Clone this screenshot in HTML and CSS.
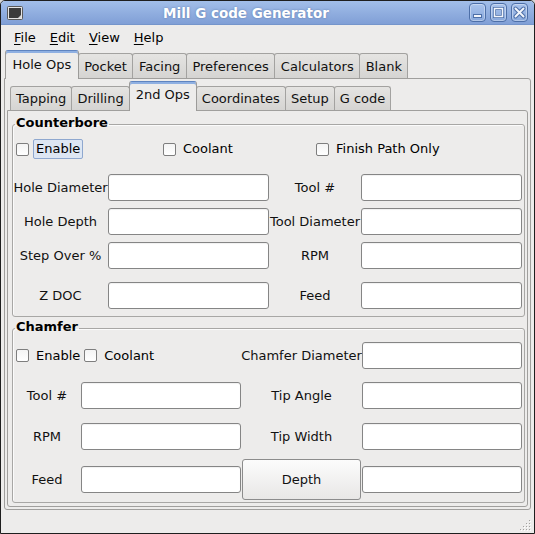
FILE: index.html
```html
<!DOCTYPE html>
<html>
<head>
<meta charset="utf-8">
<title>Mill G code Generator</title>
<link rel="stylesheet" href="styles.css">
</head>
<body>
<div class="window">
  <div class="titlebar">
    <svg class="app-icon" width="16" height="14" viewBox="0 0 16 14">
      <rect x="0.5" y="0.5" width="15" height="13" rx="1" fill="#e4e4e4" stroke="#5a5a5a"/>
      <rect x="2" y="2" width="12" height="10" fill="#3c3c3c"/>
      <path d="M11 12 L14 9 L14 12 Z" fill="#d8d8d8"/>
    </svg>
    <div class="title">Mill G code Generator</div>
    <div class="wm-buttons">
      <span class="wm-btn">
        <svg width="15" height="17" viewBox="0 0 15 17"><rect x="3.5" y="10.5" width="8" height="3" fill="#f2f5fb" stroke="#4d6fa8" stroke-width="1"/></svg>
      </span>
      <span class="wm-btn">
        <svg width="15" height="17" viewBox="0 0 15 17"><rect x="3.5" y="4.5" width="8" height="8" fill="none" stroke="#4d6fa8" stroke-width="3"/><rect x="3.5" y="4.5" width="8" height="8" fill="none" stroke="#f2f5fb" stroke-width="1.5"/></svg>
      </span>
      <span class="wm-btn">
        <svg width="15" height="17" viewBox="0 0 15 17"><path d="M3.5 4.5 L11.5 12.5 M11.5 4.5 L3.5 12.5" stroke="#4d6fa8" stroke-width="4" stroke-linecap="round"/><path d="M3.5 4.5 L11.5 12.5 M11.5 4.5 L3.5 12.5" stroke="#f2f5fb" stroke-width="2" stroke-linecap="round"/></svg>
      </span>
    </div>
  </div>

  <div class="menubar">
    <span class="menu"><u>F</u>ile</span>
    <span class="menu"><u>E</u>dit</span>
    <span class="menu"><u>V</u>iew</span>
    <span class="menu"><u>H</u>elp</span>
  </div>

  <div class="main">
    <div class="tabbar outer-tabs">
      <div class="tab active">Hole Ops</div>
      <div class="tab">Pocket</div>
      <div class="tab">Facing</div>
      <div class="tab">Preferences</div>
      <div class="tab">Calculators</div>
      <div class="tab">Blank</div>
    </div>
    <div class="pane outer-pane">
      <div class="tabbar inner-tabs">
        <div class="tab">Tapping</div>
        <div class="tab">Drilling</div>
        <div class="tab active">2nd Ops</div>
        <div class="tab">Coordinates</div>
        <div class="tab">Setup</div>
        <div class="tab">G code</div>
      </div>
      <div class="pane inner-pane">
        <fieldset class="group counterbore">
          <legend>Counterbore</legend>
          <div class="checks cb-checks">
            <label class="check"><input type="checkbox"><span class="check-text focused">Enable</span></label>
            <label class="check"><input type="checkbox"><span class="check-text">Coolant</span></label>
            <label class="check"><input type="checkbox"><span class="check-text">Finish Path Only</span></label>
          </div>
          <div class="row cb-cols first">
            <span class="lbl">Hole Diameter</span><input type="text" class="field">
            <span class="lbl">Tool #</span><input type="text" class="field">
          </div>
          <div class="row cb-cols">
            <span class="lbl">Hole Depth</span><input type="text" class="field">
            <span class="lbl">Tool Diameter</span><input type="text" class="field">
          </div>
          <div class="row cb-cols">
            <span class="lbl">Step Over %</span><input type="text" class="field">
            <span class="lbl">RPM</span><input type="text" class="field">
          </div>
          <div class="row cb-cols wide-gap">
            <span class="lbl">Z DOC</span><input type="text" class="field">
            <span class="lbl">Feed</span><input type="text" class="field">
          </div>
        </fieldset>

        <fieldset class="group chamfer">
          <legend>Chamfer</legend>
          <div class="row ch-cols ch-first">
            <div class="checks ch-checks">
              <label class="check"><input type="checkbox"><span class="check-text">Enable</span></label>
              <label class="check"><input type="checkbox"><span class="check-text">Coolant</span></label>
            </div>
            <span class="lbl">Chamfer Diameter</span><input type="text" class="field">
          </div>
          <div class="row ch-cols ch-r2">
            <span class="lbl">Tool #</span><input type="text" class="field">
            <span class="lbl">Tip Angle</span><input type="text" class="field">
          </div>
          <div class="row ch-cols ch-r3">
            <span class="lbl">RPM</span><input type="text" class="field">
            <span class="lbl">Tip Width</span><input type="text" class="field">
          </div>
          <div class="row ch-cols ch-r4">
            <span class="lbl">Feed</span><input type="text" class="field">
            <button type="button" class="btn">Depth</button><input type="text" class="field">
          </div>
        </fieldset>
      </div>
    </div>
  </div>

  <div class="statusbar">
    <svg class="grip" width="11" height="11" viewBox="0 0 11 11">
      <g fill="#ffffff">
        <rect x="10" y="1" width="1" height="1"/>
        <rect x="7" y="4" width="1" height="1"/><rect x="10" y="4" width="1" height="1"/>
        <rect x="4" y="7" width="1" height="1"/><rect x="7" y="7" width="1" height="1"/><rect x="10" y="7" width="1" height="1"/>
        <rect x="1" y="10" width="1" height="1"/><rect x="4" y="10" width="1" height="1"/><rect x="7" y="10" width="1" height="1"/><rect x="10" y="10" width="1" height="1"/>
      </g>
      <g fill="#a3a2a0">
        <rect x="9" y="0" width="1" height="1"/>
        <rect x="6" y="3" width="1" height="1"/><rect x="9" y="3" width="1" height="1"/>
        <rect x="3" y="6" width="1" height="1"/><rect x="6" y="6" width="1" height="1"/><rect x="9" y="6" width="1" height="1"/>
        <rect x="0" y="9" width="1" height="1"/><rect x="3" y="9" width="1" height="1"/><rect x="6" y="9" width="1" height="1"/><rect x="9" y="9" width="1" height="1"/>
      </g>
    </svg>
  </div>
</div>
</body>
</html>
```

FILE: styles.css
```css
* { box-sizing: border-box; }

html, body {
  margin: 0;
  padding: 0;
  background: #d6d6d6;
}

body {
  font-family: "DejaVu Sans", "Noto Sans", sans-serif;
  font-size: 13px;
  color: #000;
}

.window {
  width: 535px;
  height: 534px;
  border: 1px solid #1e1e1e;
  border-radius: 5px 5px 0 0;
  background: #edeceb;
  display: flex;
  flex-direction: column;
  overflow: hidden;
}

/* ---------- title bar ---------- */
.titlebar {
  height: 24px;
  flex: none;
  display: flex;
  align-items: center;
  padding: 0 6px;
  background: linear-gradient(#a2bee9, #809fd6);
  border-bottom: 1px solid #7595cb;
}

.app-icon { flex: none; }

.title {
  flex: 1;
  text-align: center;
  font-weight: bold;
  font-size: 13.5px;
  color: #ffffff;
  text-shadow: 0 0 2px rgba(50, 80, 130, 0.55);
  padding-top: 1px;
}

.wm-buttons {
  display: flex;
  gap: 4px;
  flex: none;
}

.wm-btn {
  width: 17px;
  height: 19px;
  border: 1px solid #4d6fa8;
  border-radius: 4px;
  background: linear-gradient(#a9c3ec, #88a8dc);
  box-shadow: inset 0 0 0 1px rgba(255, 255, 255, 0.35);
  display: flex;
  align-items: center;
  justify-content: center;
}

/* ---------- menu bar ---------- */
.menubar {
  height: 23px;
  flex: none;
  display: flex;
  align-items: center;
  padding: 2px 0 0 6px;
}

.menu {
  padding: 0 7px;
  line-height: 18px;
}

.menu u { text-decoration-thickness: 1px; text-underline-offset: 2px; }

/* ---------- tabs ---------- */
.main {
  flex: 1;
  display: flex;
  flex-direction: column;
  padding: 0 3px;
}

.tabbar {
  display: flex;
  align-items: flex-end;
  flex: none;
}

.outer-tabs {
  height: 30px;
  padding-left: 1px;
}

.inner-tabs {
  height: 29px;
  padding-left: 3px;
}

.tab {
  height: 25px;
  display: flex;
  align-items: center;
  white-space: nowrap;
  padding: 0 5.5px;
  border: 1px solid #a3a2a0;
  border-bottom: none;
  border-radius: 3px 3px 0 0;
  margin-left: -1px;
  background: linear-gradient(#e5e4e2, #d5d4d2);
  color: #111;
}

.tab:first-child { margin-left: 0; }

.inner-tabs .tab {
  height: 24px;
  padding: 0 5px;
}

.tab.active {
  background: #edeceb;
  border-color: #9c9b99;
  border-top: 1px solid #5f84c0;
  box-shadow: inset 0 2px 0 #8fb0e2;
  margin-bottom: -1px;
  z-index: 1;
  height: 29px;
  padding: 0 6.5px 2px 6.5px;
}

.inner-tabs .tab.active {
  height: 30px;
  padding: 0 6px 4px 6px;
}

.pane {
  border: 1px solid #a09f9d;
  background: #edeceb;
  display: flex;
  flex-direction: column;
}

.outer-pane {
  flex: 1;
  padding: 2px;
  border-radius: 0 3px 3px 3px;
}

.inner-pane {
  flex: 1;
  padding: 4px 2px 3px 4px;
  border-radius: 0 3px 3px 3px;
}

/* ---------- group boxes ---------- */
.group {
  margin: 0;
  padding: 0 0 7px 0;
  min-inline-size: 0;
  border: 1px solid #a8a7a5;
  border-radius: 3px;
  box-shadow: inset 1px 1px 0 #fbfbfb;
}

.group legend {
  font-weight: bold;
  font-size: 13px;
  line-height: 15px;
  padding: 0 1px 3px 1px;
  margin-left: 2px;
}

.chamfer {
  margin-top: 2px;
  padding-bottom: 2px;
}

/* ---------- checkboxes ---------- */
.checks {
  display: flex;
  align-items: center;
}

.cb-checks {
  display: grid;
  grid-template-columns: 147px 153px 1fr;
  height: 20px;
  margin-top: 6px;
  padding-left: 3px;
}

.ch-checks {
  grid-column: span 2;
  gap: 1px;
  padding-left: 3px;
}

.check {
  display: flex;
  align-items: center;
  gap: 4px;
  white-space: nowrap;
}

.check input {
  appearance: none;
  -webkit-appearance: none;
  width: 13px;
  height: 13px;
  margin: 0;
  border: 1px solid #7e7e7e;
  border-radius: 2px;
  background: linear-gradient(#f4f4f4, #ffffff);
  flex: none;
}

.check-text {
  line-height: 18px;
  padding: 0 2px;
  border: 1px solid transparent;
  border-radius: 2px;
}

.check-text.focused {
  background: #dde6f3;
  border-color: #8fa8cf;
}

/* ---------- form rows ---------- */
.row {
  display: grid;
  align-items: center;
  height: 27px;
  margin-top: 7px;
}

.cb-cols { grid-template-columns: 95px 161px 92px 161px; }
.ch-cols { grid-template-columns: 68px 160px 121px 160px; }

.row.first { margin-top: 15px; }
.row.wide-gap { margin-top: 13px; }

.ch-first { margin-top: 5px; }
.ch-r2 { margin-top: 13px; }
.ch-r3 { margin-top: 14px; }
.ch-r4 { margin-top: 9px; height: 41px; }

.lbl {
  text-align: center;
  white-space: nowrap;
  color: #111;
}

.field {
  width: 100%;
  height: 27px;
  margin: 0;
  padding: 0 4px;
  border: 1px solid #858585;
  border-radius: 3px;
  background: #ffffff;
  box-shadow: inset 0 1px 1px rgba(0, 0, 0, 0.06);
  font: inherit;
}

.btn {
  height: 41px;
  margin: 0 1px;
  width: calc(100% - 2px);
  border: 1px solid #8c8c8c;
  border-radius: 3px;
  background: linear-gradient(#fcfcfc, #e8e7e6);
  font: inherit;
  color: #111;
  padding: 0;
}

/* ---------- status bar ---------- */
.statusbar {
  height: 23px;
  flex: none;
  display: flex;
  justify-content: flex-end;
  align-items: flex-end;
  padding: 0 3px 2px 0;
}
```
